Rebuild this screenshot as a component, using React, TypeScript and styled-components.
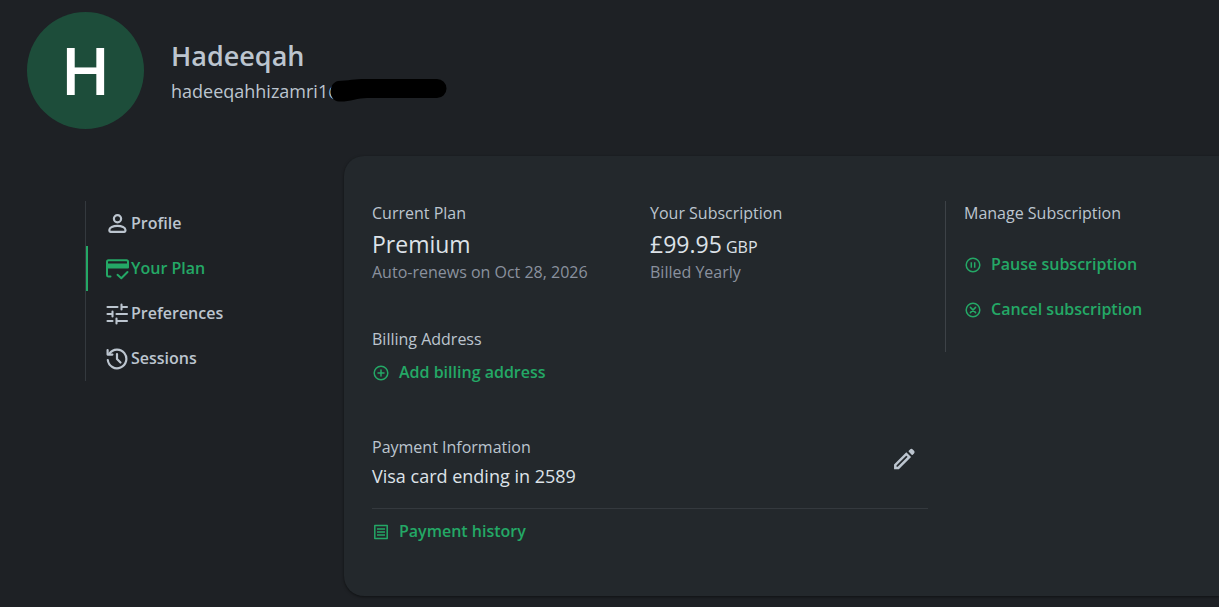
import React from "react";
import styled, { createGlobalStyle } from "styled-components";

const color = {
  page: "#1e2125",
  card: "#23282c",
  green: "#24a866",
  text: "#dde2e8",
  label: "#bcc5cf",
  muted: "#8a919e",
  line: "#34393e",
};

const GlobalStyle = createGlobalStyle`
  *, *::before, *::after { box-sizing: border-box; }
  html { background: ${color.page}; }
  body {
    margin: 0;
    font-family: "Open Sans", "Noto Sans", sans-serif;
    font-size: 16px;
    line-height: 24px;
    color: ${color.label};
    overflow-x: hidden;
  }
  h1, h2, p, ul { margin: 0; padding: 0; }
`;

const Page = styled.div`
  padding: 12px 0 11px 27px;
`;

const Header = styled.header`
  display: flex;
  align-items: center;
  gap: 27px;
`;

const Avatar = styled.div`
  display: flex;
  align-items: center;
  justify-content: center;
  width: 117px;
  height: 117px;
  padding-bottom: 4px;
  border-radius: 50%;
  background: #1d4d3a;
  color: #fff;
  font-size: 66px;
  font-weight: 600;
  line-height: 66px;
`;

const UserName = styled.h1`
  font-size: 27px;
  font-weight: 600;
  line-height: 40px;
`;

const Email = styled.p`
  display: flex;
  align-items: center;
  font-size: 18px;
  line-height: 30px;
`;

const Redaction = styled.svg`
  flex: none;
  margin-left: -15px;
`;

const Body = styled.div`
  display: flex;
  align-items: flex-start;
  margin-top: 27px;
`;

const SideNav = styled.nav`
  flex: 0 0 259px;
  margin: 45px 0 0 58px;
`;

const NavList = styled.ul`
  list-style: none;
  border-left: 1px solid ${color.line};
`;

const NavLink = styled.a<{ $active?: boolean }>`
  display: flex;
  align-items: center;
  gap: 2px;
  height: 45px;
  padding: 0 0 2px 17px;
  border-left: 2px solid ${(p) => (p.$active ? color.green : "transparent")};
  color: ${(p) => (p.$active ? color.green : color.label)};
  font-weight: 600;
  text-decoration: none;
`;

const Card = styled.main`
  flex: 1 1 0;
  min-width: 0;
  display: grid;
  grid-template-columns: minmax(0, 1fr) 274px;
  column-gap: 17px;
  align-items: start;
  padding: 45px 0 53px 28px;
  border-radius: 20px 0 0 20px;
  background: ${color.card};
  box-shadow: 0 1px 3px rgba(0, 0, 0, 0.5);
`;

const Summary = styled.div`
  display: grid;
  grid-template-columns: 1fr 1fr;
`;

const Label = styled.h2`
  font-size: 16px;
  font-weight: 400;
  line-height: 24px;
`;

const Value = styled.p`
  margin-top: 3px;
  font-size: 23px;
  line-height: 32px;
  color: ${color.text};
`;

const Currency = styled.span`
  font-size: 16px;
  line-height: 1;
`;

const Note = styled.p`
  color: ${color.muted};
`;

const Billing = styled.section`
  margin-top: 43px;
`;

const Payment = styled.section`
  display: flex;
  align-items: flex-start;
  justify-content: space-between;
  margin-top: 51px;
  padding: 0 12px 18px 0;
  border-bottom: 1px solid ${color.line};
`;

const CardNumber = styled.p`
  margin-top: 3px;
  font-size: 18px;
  line-height: 28px;
  color: ${color.text};
`;

const IconButton = styled.button`
  display: flex;
  margin-top: 12px;
  padding: 0;
  border: 0;
  background: none;
  color: ${color.label};
  cursor: pointer;
`;

const ActionButton = styled.button<{ $gap: number }>`
  display: flex;
  align-items: center;
  gap: 9px;
  margin-top: ${(p) => p.$gap}px;
  padding: 0;
  border: 0;
  background: none;
  color: ${color.green};
  font: inherit;
  font-weight: 600;
  cursor: pointer;
`;

const Manage = styled.aside`
  min-height: 151px;
  padding-left: 18px;
  border-left: 1px solid #3d4247;
`;

const Stroke = ({
  size,
  width,
  children,
}: {
  size: number;
  width: number;
  children: React.ReactNode;
}) => (
  <svg
    width={size}
    height={size}
    viewBox={`0 0 ${size} ${size}`}
    fill="none"
    stroke="currentColor"
    strokeWidth={width}
    strokeLinecap="round"
    strokeLinejoin="round"
    aria-hidden="true"
  >
    {children}
  </svg>
);

const ProfileIcon = () => (
  <Stroke size={24} width={2.2}>
    <circle cx="12.500" cy="7.800" r="3.600" />
    <path d="M4.400 19.800v-1c0-2.300 3.600-3.900 8-3.900s8 1.600 8 3.900v1c0 .6-.4 1-1 1h-14c-.6 0-1-.4-1-1z" />
  </Stroke>
);

const PlanIcon = () => (
  <Stroke size={24} width={2}>
    <path d="M5.500 20.600H3.500C2.500 20.600 2 20 2 19.200V5.700C2 4.700 2.700 4.200 3.500 4.200h18C22.500 4.200 23 4.900 23 5.700V11.500H2" />
    <path d="M2.500 8h20v3.500h-20z" fill="currentColor" strokeWidth="1" />
    <path d="M12.500 18.800l3.800 3.400 6.200-6.200" />
  </Stroke>
);

const TuneIcon = () => (
  <Stroke size={24} width={2.1}>
    <path d="M2.500 6h10M16.500 3.500v5M16.500 6h5.500M2.500 13h5M7.500 10.500v5M11.500 13H22M2.500 20h5M11.500 17.500v5M11.500 20H22" />
  </Stroke>
);

const HistoryIcon = () => (
  <Stroke size={24} width={2.2}>
    <path d="M2.800 14A9.300 9.300 0 1 0 4.500 7.500" />
    <path d="M2.600 4v4.600h4.800M12 8v5l3.500 3.500" />
  </Stroke>
);

const Ring = ({ children }: { children: React.ReactNode }) => (
  <Stroke size={18} width={1.5}>
    <circle cx="9" cy="10" r="6.800" />
    {children}
  </Stroke>
);

const PauseIcon = () => (
  <Ring>
    <path d="M7.300 7.200v5.600M10.700 7.200v5.600" strokeLinecap="butt" />
  </Ring>
);

const CancelIcon = () => (
  <Ring>
    <path d="M6.400 7.400l5.200 5.200M11.600 7.400l-5.200 5.200" />
  </Ring>
);

const AddIcon = () => (
  <Ring>
    <path d="M9 7v6M6 10h6" />
  </Ring>
);

const ReceiptIcon = () => (
  <Stroke size={18} width={1.5}>
    <path d="M2.800 3.600h12.400v13H2.800z" />
    <path d="M5 7h8M5 10h8M5 13h8" strokeLinecap="butt" />
  </Stroke>
);

const PencilIcon = () => (
  <Stroke size={24} width={2.5}>
    <path d="M3.300 20.900v-3L14.300 6.900l3 3L6.300 20.900z" strokeLinejoin="miter" />
    <path
      d="M17.300 4.300l1.300-1.300c.5-.5 1.100-.5 1.600 0l1.300 1.300c.5.5.5 1.100 0 1.600l-1.300 1.300z"
      fill="currentColor"
      strokeWidth="1.500"
    />
  </Stroke>
);

const navItems = [
  { label: "Profile", Icon: ProfileIcon },
  { label: "Your Plan", Icon: PlanIcon, active: true },
  { label: "Preferences", Icon: TuneIcon },
  { label: "Sessions", Icon: HistoryIcon },
];

export default function App() {
  return (
    <Page>
      <GlobalStyle />
      <Header>
        <Avatar>H</Avatar>
        <div>
          <UserName>Hadeeqah</UserName>
          <Email>
            hadeeqahhizamri1@
            <Redaction width="118" height="24" viewBox="0 0 118 24" aria-hidden="true">
              <path
                d="M9 2C19 1.500 26 0 36 0H108A9.500 9.500 0 0 1 108 19H38C29 19 20 23 10 22.500C-1 22 -1 4 9 2z"
                fill="#000"
              />
            </Redaction>
          </Email>
        </div>
      </Header>
      <Body>
        <SideNav aria-label="Account">
          <NavList>
            {navItems.map(({ label, Icon, active }) => (
              <li key={label}>
                <NavLink href="#" $active={active} aria-current={active ? "page" : undefined}>
                  <Icon />
                  {label}
                </NavLink>
              </li>
            ))}
          </NavList>
        </SideNav>
        <Card>
          <div>
            <Summary>
              <section>
                <Label>Current Plan</Label>
                <Value>Premium</Value>
                <Note>Auto-renews on Oct 28, 2026</Note>
              </section>
              <section>
                <Label>Your Subscription</Label>
                <Value>
                  £99.95<Currency> GBP</Currency>
                </Value>
                <Note>Billed Yearly</Note>
              </section>
            </Summary>
            <Billing>
              <Label>Billing Address</Label>
              <ActionButton type="button" $gap={9}>
                <AddIcon />
                Add billing address
              </ActionButton>
            </Billing>
            <Payment>
              <div>
                <Label>Payment Information</Label>
                <CardNumber>Visa card ending in 2589</CardNumber>
              </div>
              <IconButton type="button" aria-label="Edit payment information">
                <PencilIcon />
              </IconButton>
            </Payment>
            <ActionButton type="button" $gap={10}>
              <ReceiptIcon />
              Payment history
            </ActionButton>
          </div>
          <Manage>
            <Label>Manage Subscription</Label>
            <ActionButton type="button" $gap={27}>
              <PauseIcon />
              Pause subscription
            </ActionButton>
            <ActionButton type="button" $gap={21}>
              <CancelIcon />
              Cancel subscription
            </ActionButton>
          </Manage>
        </Card>
      </Body>
    </Page>
  );
}
